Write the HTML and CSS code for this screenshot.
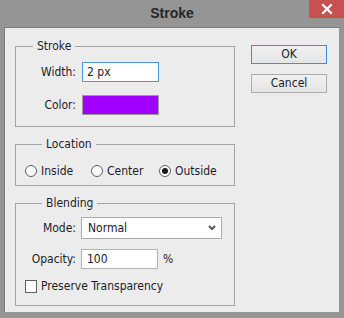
FILE: index.html
```html
<!DOCTYPE html>
<html>
<head>
<meta charset="utf-8">
<link rel="stylesheet" href="styles.css">
</head>
<body>
<div class="window">
  <div class="titlebar">
    <span></span>
    <span class="title">Stroke</span>
    <span class="close"><svg width="12" height="12" viewBox="0 0 12 12"><path d="M2 2 L10 10 M10 2 L2 10" stroke="#fff" stroke-width="2.2" stroke-linecap="square"/></svg></span>
  </div>
  <div class="client">
    <div class="groups">
      <fieldset class="group g-stroke">
        <legend>Stroke</legend>
        <div class="form">
          <label class="lbl">Width:</label>
          <div class="input focus">2 px</div>
          <label class="lbl">Color:</label>
          <div class="swatch"></div>
        </div>
      </fieldset>
      <fieldset class="group g-loc">
        <legend>Location</legend>
        <div class="radios">
          <span class="radio"><span class="circle"></span>Inside</span>
          <span class="radio"><span class="circle"></span>Center</span>
          <span class="radio"><span class="circle on"></span>Outside</span>
        </div>
      </fieldset>
      <fieldset class="group g-blend">
        <legend>Blending</legend>
        <div class="form blend">
          <label class="lbl">Mode:</label>
          <div class="select"><span>Normal</span><svg width="8" height="6" viewBox="0 0 8 6"><path d="M1 1 L4 4 L7 1" fill="none" stroke="#5a5a5a" stroke-width="2"/></svg></div>
          <label class="lbl">Opacity:</label>
          <div class="opacity"><div class="input">100</div><span class="pct">%</span></div>
        </div>
        <div class="check"><span class="box"></span>Preserve Transparency</div>
      </fieldset>
    </div>
    <div class="buttons">
      <div class="btn default">OK</div>
      <div class="btn">Cancel</div>
    </div>
  </div>
</div>
</body>
</html>
```
FILE: styles.css
```css
html, body {
  margin: 0;
  padding: 0;
}
body {
  width: 344px;
  height: 318px;
  background: #959595;
  font-family: "DejaVu Sans Condensed", "DejaVu Sans", sans-serif;
  font-stretch: condensed;
  font-size: 12px;
  color: #1c1c2a;
  overflow: hidden;
}
.window {
  display: flex;
  flex-direction: column;
  height: 318px;
}
.titlebar {
  height: 27px;
  display: grid;
  grid-template-columns: 1fr auto 1fr;
  align-items: start;
}
.title {
  font-family: "Liberation Sans", sans-serif;
  font-stretch: normal;
  font-weight: bold;
  font-size: 14px;
  color: #262626;
  line-height: 16px;
  padding-top: 5px;
}
.close {
  justify-self: end;
  width: 35px;
  height: 18px;
  background: #c75050;
  display: flex;
  align-items: center;
  justify-content: center;
}
.client {
  margin: 0 5px 6px 4px;
  height: 285px;
  box-sizing: border-box;
  background: #ececec;
  border-top: 1px solid #7c7c7c;
  border-left: 1px solid #7c7c7c;
  display: flex;
  padding: 11px 0 0 10px;
}
.groups {
  width: 220px;
  display: flex;
  flex-direction: column;
}
.group {
  margin: 0;
  border: 1px solid #a3a3a3;
  padding: 0;
  min-width: 0;
}
.group legend {
  margin-left: 17px;
  padding: 0 4px 0 4px;
  line-height: 14px;
  height: 14px;
}
.g-stroke {
  padding: 9px 0 11px 0;
}
.g-loc {
  margin-top: 10px;
  padding: 13px 0 7px 9px;
}
.g-blend {
  margin-top: 10px;
  padding: 7px 0 12px 9px;
}
.form {
  display: grid;
  grid-template-columns: 60px auto;
  column-gap: 6px;
  row-gap: 13px;
  align-items: center;
}
.lbl {
  text-align: right;
  line-height: 14px;
}
.input {
  width: 77px;
  height: 20px;
  box-sizing: border-box;
  background: #fff;
  border: 1px solid #b4b4b4;
  padding-left: 4px;
  line-height: 18px;
}
.input.focus {
  border-color: #4d96e0;
}
.swatch {
  width: 77px;
  height: 20px;
  box-sizing: border-box;
  background: #a000ff;
  border: 1px solid #9a9a9a;
}
.blend {
  grid-template-columns: 51px auto;
  column-gap: 5px;
  row-gap: 10px;
}
.blend .input {
  padding-left: 5px;
}
.select {
  width: 141px;
  height: 22px;
  box-sizing: border-box;
  background: #fff;
  border: 1px solid #acacac;
  display: flex;
  align-items: center;
  justify-content: space-between;
  padding: 0 5px 0 6px;
}
.opacity {
  display: flex;
  align-items: center;
  gap: 5px;
}
.radios {
  display: grid;
  grid-template-columns: 66px 68px auto;
  line-height: 14px;
}
.radio {
  display: flex;
  align-items: center;
  gap: 4px;
}
.circle {
  width: 12px;
  height: 12px;
  box-sizing: border-box;
  border: 1px solid #606060;
  border-radius: 50%;
  background: #fff;
  display: flex;
  align-items: center;
  justify-content: center;
}
.circle.on::after {
  content: "";
  width: 6px;
  height: 6px;
  border-radius: 50%;
  background: #1a1a1a;
}
.check {
  margin-top: 10px;
  display: flex;
  align-items: center;
  gap: 4px;
  line-height: 14px;
}
.box {
  width: 12px;
  height: 13px;
  box-sizing: border-box;
  border: 1px solid #606060;
  background: #fff;
}
.buttons {
  margin-left: 16px;
  padding-top: 6px;
  display: flex;
  flex-direction: column;
  gap: 10px;
}
.btn {
  width: 76px;
  height: 19px;
  box-sizing: border-box;
  border: 1px solid #acacac;
  background: linear-gradient(#f0f0f0, #e5e5e5);
  text-align: center;
  line-height: 17px;
}
.btn.default {
  border-color: #3c8fe8;
}
```
